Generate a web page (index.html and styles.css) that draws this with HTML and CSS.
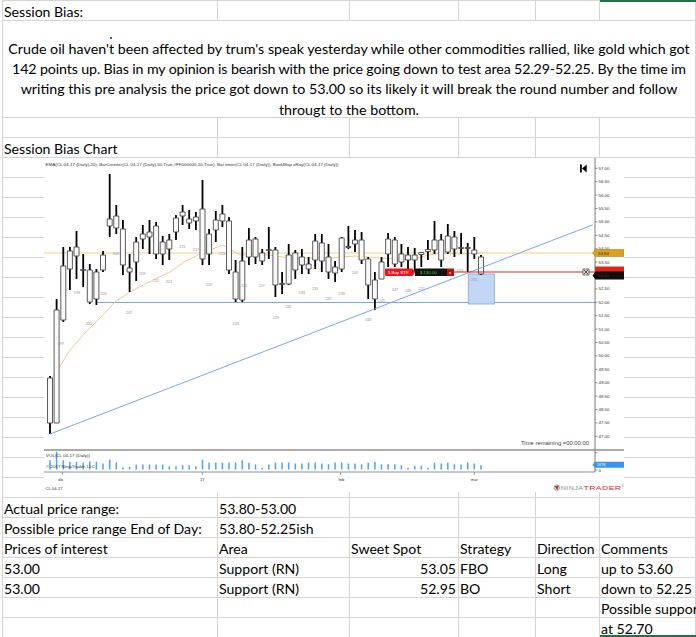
FILE: index.html
```html
<!DOCTYPE html>
<html lang="en">
<head>
<meta charset="utf-8">
<title>Session Bias</title>
<link rel="stylesheet" href="styles.css">
</head>
<body>
<div class="sheet">
  <!-- row 1 -->
  <div class="c">Session Bias:</div><div class="c"></div><div class="c"></div><div class="c"></div><div class="c"></div><div class="c"></div><div class="c"></div>
  <!-- row 2 (merged) -->
  <div class="c merged">
    <span class="ln">Crude oil haven't been affected by trum's speak yesterday while other commodities rallied, like gold which got</span>
    <span class="ln ln-tight">142 points up. Bias in my opinion is bearish with the price going down to test area 52.29-52.25. By the time im</span>
    <span class="ln">writing this pre analysis the price got down to 53.00 so its likely it will break the round number and follow</span>
    <span class="ln">througt to the bottom.</span>
    <span class="dot"></span>
  </div><div class="c"></div>
  <!-- row 3 -->
  <div class="c"></div><div class="c"></div><div class="c"></div><div class="c"></div><div class="c"></div><div class="c"></div><div class="c"></div>
  <!-- row 4 -->
  <div class="c">Session Bias Chart</div><div class="c"></div><div class="c"></div><div class="c"></div><div class="c"></div><div class="c"></div><div class="c"></div>
  <!-- chart rows -->
  <div class="chart-block">
    <svg class="chart" xmlns="http://www.w3.org/2000/svg" viewBox="44 158 580 334" width="580" height="334">
      <rect x="44" y="158" width="580" height="334" fill="#fff"/>
      <text class="hdr" x="45.5" y="165.5" textLength="293" lengthAdjust="spacingAndGlyphs">EMA(CL 04-17 (Daily),20), BarCounter(CL 04-17 (Daily),50,True,#FF000000,10,True), Bar timer(CL 04-17 (Daily)), BookMap xRay(CL 04-17 (Daily))</text>
      <!-- scroll-to-end icon -->
      <rect x="580" y="164.5" width="1.8" height="8" fill="#000"/>
      <polygon points="582,168.5 586.7,164.5 586.7,172.5" fill="#000"/>
      <!-- price lines -->
      <line x1="44" y1="253" x2="595" y2="253" stroke="#fbe6c2" stroke-width="2"/>
      <line x1="96.7" y1="302.5" x2="595" y2="302.5" stroke="#78a6ef" stroke-width="1.2"/>
      <rect x="468.3" y="274" width="26" height="30" fill="#c2d7f6" stroke="#78a6ef" stroke-width="0.8"/>
      <path d="M52 378L60 366L70 350L83 335L100 318L115 302L130 292L153 280L170 272L184 262L200 254L215 248L223 245L231 250L240 255L260 254L290 258L330 258L355 256L380 258L410 260L425 256L440 253L460 254L483 253" fill="none" stroke="#f0c47e" stroke-width="0.9"/>
      <!-- candle wicks -->
      <path d="M50 376V434M56.6 299V423M63.3 247V322M69.9 247V290M76.5 231V279M83.2 254V287M89.8 264V304M96.4 269V305M103 251V272M109.7 174V237M116.3 205V234M122.9 220V275M129.6 254V292M136.2 237V281M142.8 225V249M149.5 220V254M156.1 222V259M162.7 236V265M169.3 234V260M176 215V240M182.6 205V225M189.2 210V229M195.9 212V230M202.5 180V265M209.1 229V265M215.8 211V242M222.4 205V227M229 217V274M235.6 260V302M242.3 247V302M248.9 228V265M255.5 237V264M262.2 249V265M268.8 227V259M275.4 247V297M282.1 272V294M288.7 244V285M295.3 250V279M301.9 249V274M308.6 257V274M315.2 234V269M321.8 234V272M328.5 244V279M335.1 261V282M341.7 237V272M348.4 226V249M355 230V252M361.6 232V264M368.2 257V299M374.9 272V310M381.5 257V279M388.1 233V267M394.8 237V267M401.4 244V267M408 247V269M414.7 248V272M421.3 252V267M427.9 240V260M434.5 221V254M441.2 234V267M447.8 224V254M454.4 231V257M461.1 233V254M467.7 243V272M474.3 237V259M481 255V275" stroke="#000" stroke-width="1.8" fill="none"/>
      <!-- candle bodies -->
      <path d="M47.5 378h5v45h-5zM54.1 310h5v113h-5zM60.8 266h5v54h-5zM67.4 251h5v18h-5zM74 247h5v9h-5zM80.7 269.5h5v1h-5zM87.3 270h5v32h-5zM93.9 272h5v27h-5zM100.5 255h5v15h-5zM107.2 219h5v7h-5zM113.8 216h5v12h-5zM120.4 229h5v36h-5zM127.1 268h5v4h-5zM133.7 242h5v20h-5zM140.3 234h5v5h-5zM147 232h5v5h-5zM153.6 226h5v28h-5zM160.2 242h5v12h-5zM166.8 240h5v9h-5zM173.5 218h5v14h-5zM180.1 212h5v4h-5zM186.7 219h5v4h-5zM193.4 217h5v4h-5zM200 209h5v50h-5zM206.6 234h5v20h-5zM213.3 220h5v10h-5zM219.9 214h5v7h-5zM226.5 221h5v49h-5zM233.1 272h5v27h-5zM239.8 261h5v39h-5zM246.4 240h5v17h-5zM253 239h5v18h-5zM259.7 253h5v8h-5zM266.3 249.5h5v1h-5zM272.9 250h5v35h-5zM279.6 283.5h5v1h-5zM286.2 255h5v29h-5zM292.8 253h5v17h-5zM299.4 257h5v8h-5zM306.1 264h5v5h-5zM312.7 241h5v19h-5zM319.3 243h5v18h-5zM326 257h5v15h-5zM332.6 267h5v6h-5zM339.2 238h5v31h-5zM345.9 246.5h5v1h-5zM352.5 240h5v4h-5zM359.1 240h5v20h-5zM365.7 259h5v26h-5zM372.4 280h5v19h-5zM379 262h5v17h-5zM385.6 239h5v15h-5zM392.3 240h5v24h-5zM398.9 254h5v8h-5zM405.5 255h5v5h-5zM412.2 255h5v5h-5zM418.8 252.5h5v2h-5zM425.4 249.5h5v2h-5zM432 240h5v10h-5zM438.7 240h5v20h-5zM445.3 236h5v16h-5zM451.9 237h5v12h-5zM458.6 247.5h5v1h-5zM465.2 247.5h5v1h-5zM471.8 250h5v4h-5zM478.5 257h5v17h-5z" fill="#fafafa" stroke="#4a4a4a" stroke-width="0.9"/>
      <!-- trend line -->
      <line x1="50" y1="434" x2="593" y2="224.7" stroke="#78a6ef" stroke-width="1"/>
      <!-- bar counter labels -->
      <g class="cnt" text-anchor="middle">
        <text x="61" y="344.5">197</text><text x="77" y="293.5">199</text><text x="89" y="325">201</text><text x="103.5" y="294.5">203</text>
        <text x="116" y="254.5">205</text><text x="129" y="314">207</text><text x="142.5" y="275">209</text><text x="156" y="281.5">211</text>
        <text x="169" y="282.5">213</text><text x="182.5" y="247.5">215</text><text x="196" y="251">217</text><text x="209" y="286">219</text>
        <text x="222.5" y="254.5">221</text><text x="235.7" y="324.5">223</text><text x="244.3" y="286.5">225</text><text x="261.7" y="286.5">227</text>
        <text x="276" y="318.5">229</text><text x="288.3" y="307.5">231</text><text x="301.7" y="293.5">233</text><text x="315" y="290">235</text>
        <text x="328.3" y="300">237</text><text x="341.7" y="294.5">239</text><text x="355" y="273.5">241</text><text x="368.3" y="321">243</text>
        <text x="381.7" y="301.5">245</text><text x="395" y="290.5">247</text><text x="408.3" y="291.5">249</text><text x="421.7" y="289.5">251</text>
        <text x="460" y="272">253</text><text x="474" y="280.5">255</text>
      </g>
      <!-- order line -->
      <line x1="385" y1="272" x2="595" y2="272" stroke="#e2231a" stroke-width="1.2"/>
      <rect x="385" y="268.5" width="28" height="7.5" rx="1" fill="#e8191e"/>
      <circle cx="412" cy="272.2" r="2.6" fill="#e8191e"/>
      <text class="lbl" x="388" y="274.2" fill="#fff">1  Buy STP</text>
      <rect x="415" y="268.5" width="32" height="7.5" fill="#111"/>
      <text class="lbl" x="420" y="274.2" fill="#33d43a">$ 130.00</text>
      <rect x="447" y="268.5" width="7" height="7.5" fill="#b4110f"/>
      <text class="lbl" x="449" y="274.2" fill="#fff">x</text>
      <rect x="583" y="269" width="6" height="6" fill="#e4e4e4" stroke="#222" stroke-width="0.6"/>
      <path d="M584 270L588 274M588 270L584 274" stroke="#222" stroke-width="0.8"/>
      <!-- axes -->
      <line x1="595" y1="158" x2="595" y2="472" stroke="#555" stroke-width="0.8"/>
      <line x1="44" y1="450" x2="624" y2="450" stroke="#8f8f8f" stroke-width="1.5"/>
      <line x1="44" y1="472" x2="595" y2="472" stroke="#777" stroke-width="0.8"/>
      <path d="M595 168.3h2.5M595 181.7h2.5M595 195.1h2.5M595 208.5h2.5M595 221.9h2.5M595 235.3h2.5M595 248.7h2.5M595 262.1h2.5M595 275.5h2.5M595 288.9h2.5M595 302.3h2.5M595 315.7h2.5M595 329.1h2.5M595 342.5h2.5M595 355.9h2.5M595 369.3h2.5M595 382.7h2.5M595 396.1h2.5M595 409.5h2.5M595 422.9h2.5M595 436.3h2.5M595 452.7h2.5M595 470h2.5M62.3 472v3M202.3 472v3M340.5 472v3M474.3 472v3" stroke="#555" stroke-width="0.6"/>
      <g class="ax">
        <text x="598.5" y="169.8">57.00</text><text x="598.5" y="183.2">56.50</text><text x="598.5" y="196.6">56.00</text><text x="598.5" y="210">55.50</text>
        <text x="598.5" y="223.4">55.00</text><text x="598.5" y="236.8">54.50</text><text x="598.5" y="250.2">54.00</text><text x="598.5" y="263.6">53.50</text>
        <text x="598.5" y="290.4">52.50</text><text x="598.5" y="303.8">52.00</text><text x="598.5" y="317.2">51.50</text><text x="598.5" y="330.6">51.00</text>
        <text x="598.5" y="344">50.50</text><text x="598.5" y="357.4">50.00</text><text x="598.5" y="370.8">49.50</text><text x="598.5" y="384.2">49.00</text>
        <text x="598.5" y="397.6">48.50</text><text x="598.5" y="411">48.00</text><text x="598.5" y="424.4">47.50</text><text x="598.5" y="437.8">47.00</text>
        <text x="598.5" y="471.5">0</text>
      </g>
      <!-- axis price markers -->
      <polygon points="592.5,253 595.5,249.5 624,249.5 624,256.5 595.5,256.5" fill="#d9a21c" stroke="#a9790c" stroke-width="0.5"/>
      <text class="ax" x="598" y="254.6" fill="#222">53.84</text>
      <rect x="595" y="266.5" width="29" height="5.5" fill="#e2231a"/>
      <polygon points="592.5,275.5 595.5,271.5 624,271.5 624,279.5 595.5,279.5" fill="#0d0d0d"/>
      <text class="ax" x="598" y="277.2" fill="#fff">53.00</text>
      <text class="tr" x="521" y="444.5" textLength="68" lengthAdjust="spacingAndGlyphs">Time remaining =00:00:00</text>
      <!-- volume -->
      <path d="M50 469.5v-9.3M56.6 469.5v-17.7M63.3 469.5v-9.3M69.9 469.5v-7.7M76.5 469.5v-7.7M83.2 469.5v-7M89.8 469.5v-8.3M96.4 469.5v-7.7M103 469.5v-6M109.7 469.5v-10M116.3 469.5v-7M122.9 469.5v-2M129.6 469.5v-2.7M136.2 469.5v-5M142.8 469.5v-5M149.5 469.5v-5M156.1 469.5v-5M162.7 469.5v-5M169.3 469.5v-3.3M176 469.5v-3.3M182.6 469.5v-4.3M189.2 469.5v-4.3M195.9 469.5v-3.3M202.5 469.5v-10M209.1 469.5v-7M215.8 469.5v-7M222.4 469.5v-6.7M229 469.5v-6.7M235.6 469.5v-7M242.3 469.5v-9.3M248.9 469.5v-6.7M255.5 469.5v-5M262.2 469.5v-1.7M268.8 469.5v-5M275.4 469.5v-7M282.1 469.5v-7M288.7 469.5v-7M295.3 469.5v-6M301.9 469.5v-6M308.6 469.5v-7M315.2 469.5v-7M321.8 469.5v-6M328.5 469.5v-5.3M335.1 469.5v-7M341.7 469.5v-7M348.4 469.5v-6M355 469.5v-6M361.6 469.5v-5.3M368.2 469.5v-6.7M374.9 469.5v-7.7M381.5 469.5v-5.3M388.1 469.5v-5.3M394.8 469.5v-5.3M401.4 469.5v-4.3M408 469.5v-1.7M414.7 469.5v-3.7M421.3 469.5v-3.7M427.9 469.5v-1.7M434.5 469.5v-6.7M441.2 469.5v-6M447.8 469.5v-6.7M454.4 469.5v-5.3M461.1 469.5v-5M467.7 469.5v-7M474.3 469.5v-6M481 469.5v-4.3" stroke="#4ea2f4" stroke-width="1.5" fill="none"/>
      <text class="sm" x="46" y="456.5" textLength="44" lengthAdjust="spacingAndGlyphs">VOL(CL 04-17 (Daily))</text>
      <text class="sm" x="46" y="468" textLength="49" lengthAdjust="spacingAndGlyphs">© 2017 NinjaTrader, LLC</text>
      <polygon points="592.5,464.7 595,461.7 624,461.7 624,467.7 595,467.7" fill="#3b93f1"/>
      <text class="vl" x="597" y="466.3">267K</text>
      <!-- x axis labels -->
      <g class="sm" text-anchor="middle">
        <text x="61" y="481">dic</text><text x="202.3" y="481">17</text><text x="341.5" y="481">feb</text><text x="474.3" y="481">mar</text>
      </g>
      <text class="sm" x="45.5" y="489.8">CL 04-17</text>
      <!-- NinjaTrader logo -->
      <circle cx="556.8" cy="487.6" r="2.7" fill="none" stroke="#9a9a9a" stroke-width="1"/>
      <path d="M554.6 486.2L557.4 490.2L559 485.4Z" fill="#c5332c"/>
      <text class="nj" x="560.8" y="490.3" textLength="22.5" lengthAdjust="spacingAndGlyphs">NINJA</text>
      <text class="nj tr2" x="583.5" y="490.3" textLength="38" lengthAdjust="spacingAndGlyphs">TRADER</text>
      <text class="reg" x="621.8" y="487">®</text>
    </svg>
  </div>
  <!-- data rows -->
  <div class="c">Actual price range:</div><div class="c">53.80-53.00</div><div class="c"></div><div class="c"></div><div class="c"></div><div class="c"></div><div class="c"></div>
  <div class="c">Possible price range End of Day:</div><div class="c">53.80-52.25ish</div><div class="c"></div><div class="c"></div><div class="c"></div><div class="c"></div><div class="c"></div>
  <div class="c">Prices of interest</div><div class="c">Area</div><div class="c">Sweet Spot</div><div class="c">Strategy</div><div class="c">Direction</div><div class="c">Comments</div><div class="c"></div>
  <div class="c">53.00</div><div class="c">Support (RN)</div><div class="c num">53.05</div><div class="c">FBO</div><div class="c">Long</div><div class="c">up to 53.60</div><div class="c"></div>
  <div class="c">53.00</div><div class="c">Support (RN)</div><div class="c num">52.95</div><div class="c">BO</div><div class="c">Short</div><div class="c">down to 52.25</div><div class="c"></div>
  <div class="c"></div><div class="c"></div><div class="c"></div><div class="c"></div><div class="c"></div><div class="c">Possible support</div><div class="c"></div>
  <div class="c"></div><div class="c"></div><div class="c"></div><div class="c"></div><div class="c"></div><div class="c">at 52.70</div><div class="c"></div>
  <div class="sel sel-top"></div>
  <div class="sel sel-bottom"></div>
</div>
</body>
</html>
```
FILE: styles.css
```css
html, body {
  margin: 0;
  padding: 0;
  overflow: hidden;
  background: #fff;
}
body {
  font-family: Lato, "Liberation Sans", sans-serif;
  font-size: 14.1px;
  color: #000;
}
.sheet {
  position: relative;
  margin-left: 2px;
  width: max-content;
  border-left: 1px solid #d4d4d4;
  border-top: 1px solid #d4d4d4;
  display: grid;
  grid-template-columns: 215px 132px 109px 77px 64px 96px 60px;
  grid-template-rows: 20px 97px 20px 20px 340px repeat(7, 20px);
}
.c {
  border-right: 1px solid #d4d4d4;
  border-bottom: 1px solid #d4d4d4;
  padding: 1px 2px 0 1px;
  white-space: nowrap;
  line-height: 19px;
  position: relative;
}
.c.num {
  text-align: right;
  padding-right: 2px;
}
.merged {
  grid-column: 1 / 7;
  text-align: center;
  padding: 18px 0 0 0;
  line-height: 20.2px;
  font-size: 14.25px;
}
.ln {
  display: block;
  white-space: nowrap;
}
.ln-tight {
  letter-spacing: -0.14px;
}
.dot {
  position: absolute;
  left: 107px;
  top: 16px;
  width: 2px;
  height: 2px;
  background: #3c64c8;
}
.chart-block {
  grid-column: 1 / 8;
  position: relative;
  background-image:
    linear-gradient(to right, transparent 214px, #d4d4d4 214px, #d4d4d4 215px, transparent 215px),
    linear-gradient(to right, transparent 346px, #d4d4d4 346px, #d4d4d4 347px, transparent 347px),
    linear-gradient(to right, transparent 455px, #d4d4d4 455px, #d4d4d4 456px, transparent 456px),
    linear-gradient(to right, transparent 532px, #d4d4d4 532px, #d4d4d4 533px, transparent 533px),
    linear-gradient(to right, transparent 596px, #d4d4d4 596px, #d4d4d4 597px, transparent 597px),
    linear-gradient(to right, transparent 692px, #d4d4d4 692px, #d4d4d4 693px, transparent 693px),
    repeating-linear-gradient(to bottom, transparent 0, transparent 19px, #d4d4d4 19px, #d4d4d4 20px);
}
.chart {
  position: absolute;
  left: 41px;
  top: 0;
  display: block;
}
.chart text {
  font-family: "Liberation Sans", Arial, sans-serif;
}
.hdr { font-size: 4.2px; fill: #333; }
.cnt text { font-size: 3.8px; fill: #8f8f8f; }
.lbl { font-size: 4.3px; }
.ax { font-size: 4.4px; fill: #333; }
.tr { font-size: 5.2px; fill: #444; }
.sm { font-size: 4.2px; fill: #333; }
.vl { font-size: 3.8px; fill: #fff; }
.nj { font-size: 6.2px; fill: #8d8d8d; letter-spacing: 0.3px; }
.tr2 { fill: #c5332c; }
.reg { font-size: 3px; fill: #c5332c; }
.sel {
  position: absolute;
  left: 597px;
  width: 100px;
  height: 2px;
  background: #217346;
}
.sel-top { top: -1px; }
.sel-bottom { top: 634px; }
```
